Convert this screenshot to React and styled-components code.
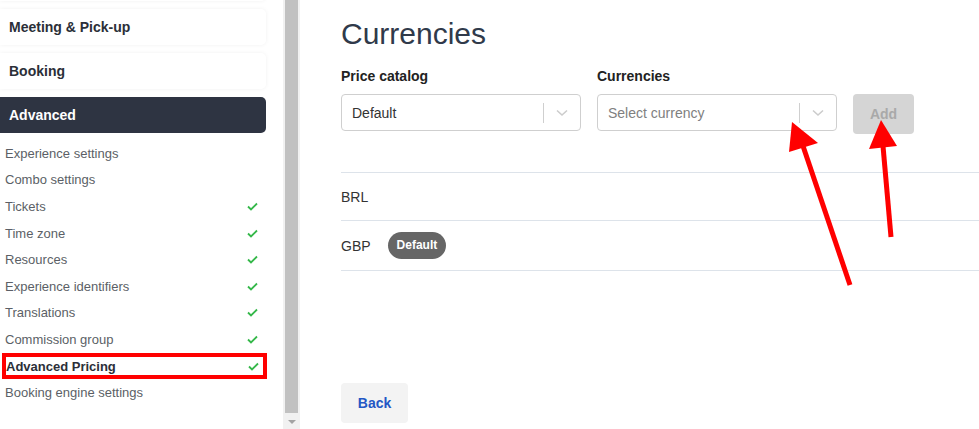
import React from "react";
import styled, { createGlobalStyle } from "styled-components";

const Global = createGlobalStyle`
  html, body {
    margin: 0;
    padding: 0;
    background: #ffffff;
    font-family: "Liberation Sans", Arial, sans-serif;
    overflow: hidden;
  }
`;

const Page = styled.div`
  position: relative;
  width: 979px;
  height: 429px;
  display: grid;
  grid-template-columns: 283px 17px 1fr;
  overflow: hidden;
`;

const Sidebar = styled.aside`
  display: flex;
  flex-direction: column;
  padding-right: 17px;
  overflow: hidden;
`;

const Cards = styled.div`
  display: flex;
  flex-direction: column;
  gap: 8px;
  margin-top: -35px;
`;

const Card = styled.div`
  height: 36px;
  display: flex;
  align-items: center;
  padding-left: 9px;
  border-radius: 0 5px 5px 0;
  background: ${({ $active }) => ($active ? "#2e3442" : "#ffffff")};
  color: ${({ $active }) => ($active ? "#ffffff" : "#2b2f38")};
  box-shadow: ${({ $active }) => ($active ? "none" : "0 0 4px rgba(0,0,0,0.06)")};
  font-size: 14px;
  font-weight: bold;
`;

const SubList = styled.ul`
  list-style: none;
  margin: 7px 0 0;
  padding: 0;
`;

const SubItem = styled.li`
  box-sizing: border-box;
  height: 26.6px;
  display: flex;
  align-items: center;
  justify-content: space-between;
  padding: 0 8px 0 5px;
  font-size: 13px;
  color: ${({ $current }) => ($current ? "#2b2f38" : "#5b5f66")};
  font-weight: ${({ $current }) => ($current ? "bold" : "normal")};
  ${({ $current }) =>
    $current &&
    `
    margin-left: 2px;
    margin-right: -1px;
    border: 4px solid #ff0000;
    padding: 0 4px 0 0;
  `}
`;

const Scrollbar = styled.div`
  display: flex;
  flex-direction: column;
  background: #f1f1f1;
  padding: 0 2px;
`;

const Thumb = styled.div`
  flex: 1;
  background: #c1c1c1;
  margin-bottom: 2px;
  margin-top: -2px;
`;

const ArrowDown = styled.div`
  height: 14px;
  display: flex;
  align-items: center;
  justify-content: center;
  &::after {
    content: "";
    border-left: 4px solid transparent;
    border-right: 4px solid transparent;
    border-top: 4px solid #a3a3a3;
  }
`;

const Main = styled.main`
  padding: 17px 0 0 41px;
  display: flex;
  flex-direction: column;
`;

const Heading = styled.h1`
  margin: 0;
  font-size: 30px;
  font-weight: normal;
  color: #303a4a;
  line-height: 34px;
`;

const Form = styled.div`
  display: flex;
  align-items: flex-end;
  gap: 16px;
  margin-top: 17px;
`;

const Field = styled.div`
  display: flex;
  flex-direction: column;
  gap: 10px;
`;

const Label = styled.label`
  font-size: 14px;
  font-weight: bold;
  color: #222;
  line-height: 16px;
`;

const Select = styled.div`
  box-sizing: border-box;
  width: 240px;
  height: 37px;
  border: 1px solid #cfcfcf;
  border-radius: 4px;
  display: flex;
  align-items: center;
  font-size: 14px;
  color: ${({ $placeholder }) => ($placeholder ? "#808080" : "#333")};
`;

const SelectValue = styled.span`
  flex: 1;
  padding-left: 10px;
`;

const Indicator = styled.span`
  width: 36px;
  height: 20px;
  border-left: 1px solid #cfcfcf;
  display: flex;
  align-items: center;
  justify-content: center;
`;

const AddButton = styled.button`
  width: 61px;
  height: 40px;
  border: none;
  border-radius: 4px;
  background: #d5d5d5;
  color: #a9a9a9;
  font-family: inherit;
  font-size: 14px;
  font-weight: bold;
  margin-bottom: -3px;
`;

const Table = styled.div`
  margin-top: 41px;
  border-top: 1px solid #dde3ea;
`;

const Row = styled.div`
  height: ${({ $h }) => $h}px;
  border-bottom: 1px solid #dde3ea;
  display: flex;
  align-items: center;
  gap: 17px;
  font-size: 14px;
  color: #333;
`;

const Badge = styled.span`
  background: #666666;
  color: #fff;
  font-size: 12px;
  font-weight: bold;
  padding: 0 9px;
  height: 27px;
  line-height: 27px;
  border-radius: 14px;
`;

const BackButton = styled.button`
  margin-top: auto;
  margin-bottom: 6px;
  width: 67px;
  height: 40px;
  border: none;
  border-radius: 4px;
  background: #f3f3f3;
  color: #2457c5;
  font-family: inherit;
  font-size: 14px;
  font-weight: bold;
`;

const Annotations = styled.svg`
  position: absolute;
  left: 0;
  top: 0;
  pointer-events: none;
`;

const Chevron = () => (
  <svg width="12" height="8" viewBox="0 0 12 8">
    <polyline points="1,1.5 6,6 11,1.5" fill="none" stroke="#cccccc" strokeWidth="1.6" />
  </svg>
);

const Check = () => (
  <svg width="11" height="9" viewBox="0 0 11 9">
    <polyline points="1,4.5 4,7.5 10,1.5" fill="none" stroke="#35b84a" strokeWidth="1.8" />
  </svg>
);

const items = [
  { label: "Experience settings" },
  { label: "Combo settings" },
  { label: "Tickets", done: true },
  { label: "Time zone", done: true },
  { label: "Resources", done: true },
  { label: "Experience identifiers", done: true },
  { label: "Translations", done: true },
  { label: "Commission group", done: true },
  { label: "Advanced Pricing", done: true, current: true },
  { label: "Booking engine settings" },
];

export default function App() {
  return (
    <>
      <Global />
      <Page>
        <Sidebar>
          <Cards>
            <Card />
            <Card>Meeting &amp; Pick-up</Card>
            <Card>Booking</Card>
            <Card $active>Advanced</Card>
          </Cards>
          <SubList>
            {items.map((it) => (
              <SubItem key={it.label} $current={it.current}>
                {it.label}
                {it.done && <Check />}
              </SubItem>
            ))}
          </SubList>
        </Sidebar>
        <Scrollbar>
          <Thumb />
          <ArrowDown />
        </Scrollbar>
        <Main>
          <Heading>Currencies</Heading>
          <Form>
            <Field>
              <Label>Price catalog</Label>
              <Select>
                <SelectValue>Default</SelectValue>
                <Indicator>
                  <Chevron />
                </Indicator>
              </Select>
            </Field>
            <Field>
              <Label>Currencies</Label>
              <Select $placeholder>
                <SelectValue>Select currency</SelectValue>
                <Indicator>
                  <Chevron />
                </Indicator>
              </Select>
            </Field>
            <AddButton>Add</AddButton>
          </Form>
          <Table>
            <Row $h={47}>BRL</Row>
            <Row $h={49}>
              GBP <Badge>Default</Badge>
            </Row>
          </Table>
          <BackButton>Back</BackButton>
        </Main>
        <Annotations width="979" height="429">
          <line x1="850" y1="285" x2="803" y2="146" stroke="#ff0000" strokeWidth="5" />
          <polygon points="792,122 789,152 818,143" fill="#ff0000" />
          <line x1="891" y1="237" x2="883" y2="146" stroke="#ff0000" strokeWidth="5" />
          <polygon points="881,120 869,149 897,146" fill="#ff0000" />
        </Annotations>
      </Page>
    </>
  );
}
